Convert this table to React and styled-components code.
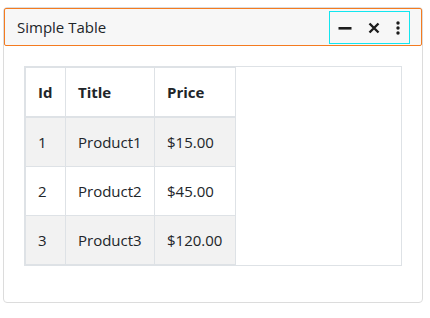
import styled, { createGlobalStyle } from "styled-components";

const GlobalStyle = createGlobalStyle`
  body {
    margin: 0;
    background: #ffffff;
    font-family: "Open Sans", "Noto Sans", sans-serif;
    color: #212529;
  }
`;

const Card = styled.div`
  box-sizing: border-box;
  width: 420px;
  height: 296px;
  margin: 7px 0 0 3px;
  border: 1px solid #dcdcdc;
  border-radius: 4px;
  background: #ffffff;
`;

const Header = styled.div`
  box-sizing: border-box;
  display: flex;
  align-items: center;
  justify-content: space-between;
  height: 38px;
  padding: 0 11px 0 12px;
  border: 1px solid #f47b20;
  border-radius: 2px;
  background: #f7f7f7;
`;

const Title = styled.span`
  font-size: 15px;
  line-height: 20px;
  color: #212529;
`;

const Tools = styled.div`
  box-sizing: border-box;
  display: flex;
  align-items: center;
  justify-content: space-between;
  height: 33px;
  width: 81px;
  margin-top: 1px;
  padding: 0 8px;
  border: 1px solid #12e6ef;
`;

const ToolButton = styled.button`
  display: flex;
  align-items: center;
  justify-content: center;
  width: ${(p) => p.w}px;
  height: 20px;
  padding: 0;
  border: none;
  background: transparent;
  color: #1c1c1c;
`;

const Body = styled.div`
  padding: 20px 20px 0 20px;
`;

const TableBox = styled.div`
  border: 1px solid #dee2e6;
`;

const Table = styled.table`
  border-collapse: collapse;
  border: 1px solid #dee2e6;
  font-size: 15px;
  line-height: 24px;
`;

const Th = styled.th`
  width: ${(p) => p.w}px;
  text-align: left;
  font-weight: 700;
  padding: 12px;
  border: 1px solid #dee2e6;
  border-bottom-width: 2px;
`;

const Row = styled.tr`
  background: ${(p) => (p.striped ? "#f2f2f2" : "#ffffff")};
`;

const Td = styled.td`
  padding: 12px;
  border: 1px solid #dee2e6;
  white-space: nowrap;
`;

const rows = [
  { id: 1, title: "Product1", price: "$15.00" },
  { id: 2, title: "Product2", price: "$45.00" },
  { id: 3, title: "Product3", price: "$120.00" },
];

function MinusIcon() {
  return (
    <svg width="14" height="14" viewBox="0 0 14 14">
      <rect x="0.5" y="6" width="13" height="2.6" fill="currentColor" />
    </svg>
  );
}

function CloseIcon() {
  return (
    <svg width="12" height="12" viewBox="0 0 12 12">
      <path d="M1.5 1.5 L10.5 10.5 M10.5 1.5 L1.5 10.5" stroke="currentColor" strokeWidth="2.4" />
    </svg>
  );
}

function DotsIcon() {
  return (
    <svg width="4" height="14" viewBox="0 0 4 14">
      <circle cx="2" cy="2" r="1.7" fill="currentColor" />
      <circle cx="2" cy="7" r="1.7" fill="currentColor" />
      <circle cx="2" cy="12" r="1.7" fill="currentColor" />
    </svg>
  );
}

export default function App() {
  return (
    <>
      <GlobalStyle />
      <Card>
        <Header>
          <Title>Simple Table</Title>
          <Tools>
            <ToolButton w={14}>
              <MinusIcon />
            </ToolButton>
            <ToolButton w={12}>
              <CloseIcon />
            </ToolButton>
            <ToolButton w={6}>
              <DotsIcon />
            </ToolButton>
          </Tools>
        </Header>
        <Body>
          <TableBox>
            <Table>
              <thead>
                <tr>
                  <Th w={15}>Id</Th>
                  <Th w={64}>Title</Th>
                  <Th w={56}>Price</Th>
                </tr>
              </thead>
              <tbody>
                {rows.map((r, i) => (
                  <Row key={r.id} striped={i % 2 === 0}>
                    <Td>{r.id}</Td>
                    <Td>{r.title}</Td>
                    <Td>{r.price}</Td>
                  </Row>
                ))}
              </tbody>
            </Table>
          </TableBox>
        </Body>
      </Card>
    </>
  );
}
